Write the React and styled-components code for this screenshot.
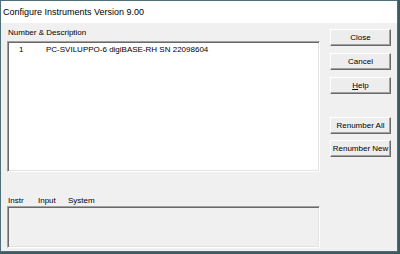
import React from 'react';
import styled, { createGlobalStyle } from 'styled-components';

const Global = createGlobalStyle`
  html, body {
    margin: 0;
    padding: 0;
    background: #3c5b61;
    width: 400px;
    height: 254px;
    overflow: hidden;
  }
  * { box-sizing: border-box; }
`;

const Window = styled.div`
  width: 398px;
  height: 252px;
  border: 1px solid #4c7078;
  display: flex;
  flex-direction: column;
  font-family: "Liberation Sans", Arial, sans-serif;
  color: #000;
`;

const TitleBar = styled.div`
  height: 22px;
  background: #fff;
  display: flex;
  align-items: center;
  padding-left: 2px;
  font-size: 9px;
`;

const Client = styled.div`
  flex: 1;
  background: #f0f0f0;
  display: flex;
  padding: 0 6px 2px 6px;
  gap: 10px;
`;

const LeftCol = styled.div`
  width: 313px;
  display: flex;
  flex-direction: column;
`;

const Label = styled.div`
  font-size: 8px;
  height: 10px;
  line-height: 10px;
  margin: ${p => p.$margin || '0'};
  padding-left: 1px;
  display: flex;
`;

const Col = styled.span`
  width: ${p => p.$w}px;
`;

const Sunken = styled.div`
  background: ${p => p.$bg || '#fff'};
  height: ${p => p.$h}px;
  border-top: 1px solid #a0a0a0;
  border-left: 1px solid #a0a0a0;
  border-bottom: 1px solid #fff;
  border-right: 1px solid #fff;
  box-shadow: inset 1px 1px 0 #696969, inset -1px -1px 0 #e3e3e3;
  padding: 3px 2px;
`;

const Row = styled.div`
  display: flex;
  font-size: 8px;
  height: 10px;
  line-height: 10px;
`;

const Num = styled.span`
  width: 36px;
  padding-left: 9px;
`;

const RightCol = styled.div`
  width: 61px;
  display: flex;
  flex-direction: column;
  padding-top: 6px;
`;

const Button = styled.div`
  height: 17px;
  margin-bottom: ${p => p.$gap}px;
  background: #ededed;
  border-top: 1px solid #fff;
  border-left: 1px solid #fff;
  border-right: 1px solid #696969;
  border-bottom: 1px solid #696969;
  box-shadow: inset -1px -1px 0 #a0a0a0;
  display: flex;
  align-items: center;
  justify-content: center;
  font-size: 8px;
  white-space: nowrap;
`;

export default function App() {
  return (
    <>
      <Global />
      <Window>
        <TitleBar>Configure Instruments Version 9.00</TitleBar>
        <Client>
          <LeftCol>
            <Label $margin="5px 0 3px 0">Number &amp; Description</Label>
            <Sunken $h={131}>
              <Row>
                <Num>1</Num>
                <span>PC-SVILUPPO-6 digiBASE-RH SN 22098604</span>
              </Row>
            </Sunken>
            <Label $margin="24px 0 0 0">
              <Col $w={30}>Instr</Col>
              <Col $w={30}>Input</Col>
              <Col $w={40}>System</Col>
            </Label>
            <Sunken $h={42} $bg="#f0f0f0" />
          </LeftCol>
          <RightCol>
            <Button $gap={7}>Close</Button>
            <Button $gap={7}>Cancel</Button>
            <Button $gap={23}><span><u>H</u>elp</span></Button>
            <Button $gap={6}>Renumber All</Button>
            <Button $gap={0}>Renumber New</Button>
          </RightCol>
        </Client>
      </Window>
    </>
  );
}
